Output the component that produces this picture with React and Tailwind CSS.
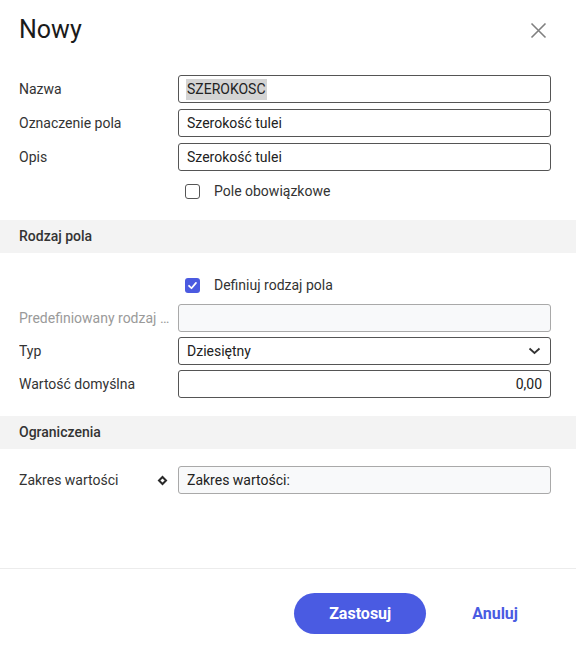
import React from 'react';

const Row = ({ label, muted, children, extra }) => (
    <div className="flex items-center h-[28px]">
        <div className={`w-[159px] shrink-0 pr-2 truncate text-[14px] ${muted ? 'text-[#9a9a9a]' : 'text-[#333]'}`}>
            {label}
        </div>
        {extra}
        <div className="flex-1 h-full">{children}</div>
    </div>
);

const Input = ({ value, right, disabled, selected }) => (
    <div
        className={`h-full w-full flex items-center px-[8px] rounded-[3px] border text-[14px] text-[#222] ${
            disabled ? 'bg-[#f8f9fa] border-[#a9a9a9]' : 'bg-white border-[#555]'
        } ${right ? 'justify-end' : ''}`}
    >
        {selected ? <span className="bg-[#d4d4d4] px-[1px] -ml-[1px]">{value}</span> : value}
    </div>
);

const Checkbox = ({ checked, label }) => (
    <div className="flex items-center h-[28px] pl-[166px]">
        {checked ? (
            <span className="w-[15px] h-[15px] rounded-[3px] bg-[#4b5ae0] flex items-center justify-center">
                <svg width="11" height="11" viewBox="0 0 12 12" fill="none">
                    <path d="M2.2 6.3 L4.9 9 L9.8 3.2" stroke="white" strokeWidth="1.9" strokeLinecap="round" strokeLinejoin="round" />
                </svg>
            </span>
        ) : (
            <span className="w-[15px] h-[15px] rounded-[3px] border border-[#555] bg-white" />
        )}
        <span className="ml-[14px] text-[14px] text-[#333]">{label}</span>
    </div>
);

const Section = ({ title }) => (
    <div className="h-[33px] bg-[#f3f3f3] flex items-center px-[19px] text-[14px] font-medium text-[#333]">
        {title}
    </div>
);

export default function App() {
    return (
        <div className="w-[576px] h-[660px] bg-white flex flex-col font-['Roboto',sans-serif]">
            <div className="h-[58px] flex items-center justify-between pl-[19px] pr-[29px] pt-[2px]">
                <h1 className="text-[25px] text-[#1a1a1a] font-normal">Nowy</h1>
                <svg width="17" height="17" viewBox="0 0 17 17" className="text-[#808080]">
                    <path d="M1.5 1.5 L15.5 15.5 M15.5 1.5 L1.5 15.5" stroke="currentColor" strokeWidth="1.6" />
                </svg>
            </div>

            <div className="pl-[19px] pr-[25px] mt-[17px] flex flex-col gap-[6px]">
                <Row label="Nazwa"><Input value="SZEROKOSC" selected /></Row>
                <Row label="Oznaczenie pola"><Input value="Szerokość tulei" /></Row>
                <Row label="Opis"><Input value="Szerokość tulei" /></Row>
                <Checkbox label="Pole obowiązkowe" />
            </div>

            <div className="mt-[15px]">
                <Section title="Rodzaj pola" />
            </div>

            <div className="pl-[19px] pr-[25px] mt-[18px] flex flex-col gap-[5px]">
                <Checkbox checked label="Definiuj rodzaj pola" />
                <Row label="Predefiniowany rodzaj pola" muted><Input value="" disabled /></Row>
                <Row label="Typ">
                    <div className="h-full w-full flex items-center justify-between px-[8px] rounded-[3px] border border-[#555] bg-white text-[14px] text-[#222]">
                        <span>Dziesiętny</span>
                        <svg width="13" height="8" viewBox="0 0 13 8" className="mr-[1px]">
                            <path d="M1.5 1.5 L6.5 6 L11.5 1.5" stroke="#333" strokeWidth="1.8" fill="none" />
                        </svg>
                    </div>
                </Row>
                <Row label="Wartość domyślna"><Input value="0,00" right /></Row>
            </div>

            <div className="mt-[18px]">
                <Section title="Ograniczenia" />
            </div>

            <div className="pl-[19px] pr-[25px] mt-[17px]">
                <div className="flex items-center h-[28px]">
                    <div className="w-[140px] shrink-0 text-[14px] text-[#333]">Zakres wartości</div>
                    <div className="w-[19px] shrink-0 flex items-center">
                        <span className="w-[7px] h-[7px] rotate-45 border-2 border-[#2a2a2a]" />
                    </div>
                    <div className="flex-1 h-full">
                        <Input value="Zakres wartości:" disabled />
                    </div>
                </div>
            </div>

            <div className="flex-1" />

            <div className="border-t border-[#ececec] h-[92px] flex items-center justify-end pr-[34px] pb-[2px]">
                <button className="w-[132px] h-[41px] rounded-full bg-[#4a5be2] text-white text-[16px] font-bold">
                    Zastosuj
                </button>
                <button className="ml-[22px] px-[24px] h-[41px] text-[#4a5be2] text-[16px] font-bold">
                    Anuluj
                </button>
            </div>
        </div>
    );
}
